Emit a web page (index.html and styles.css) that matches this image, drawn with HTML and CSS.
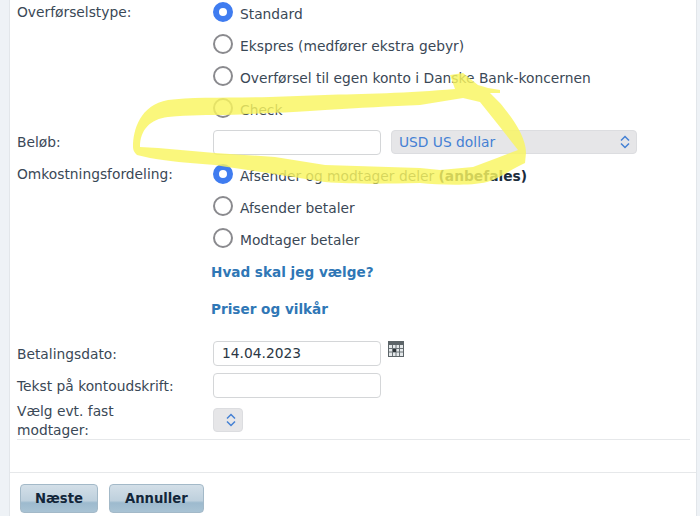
FILE: index.html
```html
<!DOCTYPE html>
<html lang="da">
<head>
<meta charset="utf-8">
<title>Overførsel</title>
<link rel="stylesheet" href="styles.css">
</head>
<body>
<div class="page">
  <main class="panel">
    <form class="form">
      <div class="row row-type">
        <div class="label">Overførselstype:</div>
        <div class="options">
          <div class="option"><span class="radio on"></span><span class="opt-text">Standard</span></div>
          <div class="option"><span class="radio"></span><span class="opt-text">Ekspres (medfører ekstra gebyr)</span></div>
          <div class="option"><span class="radio"></span><span class="opt-text">Overførsel til egen konto i Danske Bank-koncernen</span></div>
          <div class="option"><span class="radio"></span><span class="opt-text">Check</span></div>
        </div>
      </div>
      <div class="row row-amount">
        <div class="label">Beløb:</div>
        <div class="field-line">
          <div class="input"></div>
          <div class="select wide"><span>USD US dollar</span>
            <svg class="chev" viewBox="0 0 10 14" width="10" height="14"><path d="M1 5.500 5 1.500 9 5.500M1 8.500 5 12.500 9 8.500"/></svg>
          </div>
        </div>
      </div>
      <div class="row row-cost">
        <div class="label">Omkostningsfordeling:</div>
        <div class="options">
          <div class="option"><span class="radio on"></span><span class="opt-text">Afsender og modtager deler <b>(anbefales)</b></span></div>
          <div class="option"><span class="radio"></span><span class="opt-text">Afsender betaler</span></div>
          <div class="option"><span class="radio"></span><span class="opt-text">Modtager betaler</span></div>
        </div>
      </div>
      <div class="links">
        <a class="link">Hvad skal jeg vælge?</a>
        <a class="link">Priser og vilkår</a>
      </div>
      <div class="row row-date">
        <div class="label">Betalingsdato:</div>
        <div class="field-line">
          <div class="input">14.04.2023</div>
          <svg class="cal" viewBox="0 0 16 16" width="16" height="16">
            <rect x="0" y="0" width="16" height="16" fill="#5c6468"/>
            <path d="M1 4h14v11H1z" fill="#e4e8ea"/>
            <path d="M4.500 4v11M8 4v11M11.500 4v11M1 7.500h14M1 11h14" stroke="#6a7276" stroke-width="1"/>
            <rect x="5" y="8" width="3" height="3" fill="#2e3438"/>
          </svg>
        </div>
      </div>
      <div class="row row-text">
        <div class="label">Tekst på kontoudskrift:</div>
        <div class="input"></div>
      </div>
      <div class="row row-payee">
        <div class="label">Vælg evt. fast<br>modtager:</div>
        <div class="select mini">
          <svg class="chev" viewBox="0 0 10 14" width="10" height="14"><path d="M1 5.500 5 1.500 9 5.500M1 8.500 5 12.500 9 8.500"/></svg>
        </div>
      </div>
    </form>
    <div class="spacer"></div>
    <div class="actions">
      <button type="button" class="btn">Næste</button>
      <button type="button" class="btn">Annuller</button>
    </div>
  </main>
</div>
<svg class="marker" viewBox="0 0 700 516" width="700" height="516">
  <path fill-rule="evenodd" d="M133 147C133 130 140 105 168 100C190 97 225 98 270 97L325 95C360 94 410 93 455 89L450 75L463 73L478 85L488 88L500 90V93H490L500 103C510 115 526 135 526 153L525 163C510 170 500 178 487 182C470 186 440 185 420 183C380 184 350 184 325 182C300 178 260 172 215 165C190 163 165 161 150 158L137 155C134 152 133 150 133 147ZM140 147C140 130 150 119 168 117C190 115 210 115 225 115C270 113 300 112 325 110C360 108 390 106 420 105L463 98L480 102L500 127L518 150L497 158L473 167L440 170L420 168L325 165L275 157L215 153L158 148Z"/>
</svg>
</body>
</html>
```

FILE: styles.css
```css
html, body {
  margin: 0;
  padding: 0;
  width: 700px;
  height: 516px;
  overflow: hidden;
  background: #eef2f6;
  font-family: "DejaVu Sans", sans-serif;
  font-size: 13.8px;
  color: #3a4856;
}

.page {
  height: 516px;
  padding-left: 9px;
  padding-right: 3px;
  box-sizing: border-box;
}

.panel {
  height: 516px;
  background: #fff;
  border-left: 1px solid #e2e6ea;
  border-right: 1px solid #e2e6ea;
  box-sizing: border-box;
  padding-left: 7px;
  display: flex;
  flex-direction: column;
}

.form {
  margin-right: 6px;
  border-bottom: 1px solid #e6e8ea;
}

.row {
  display: grid;
  grid-template-columns: 196px 1fr;
  align-items: start;
}

.label {
  line-height: 17px;
}

.options {
  display: flex;
  flex-direction: column;
  gap: 12px;
}

.option {
  display: flex;
  align-items: center;
  gap: 7px;
  height: 20px;
  line-height: 20px;
}

.opt-text {
  margin-top: 4px;
}

.radio {
  width: 20px;
  height: 20px;
  box-sizing: border-box;
  border: 2px solid #8a8a8e;
  border-radius: 50%;
  background: #fff;
  flex: none;
}

.radio.on {
  border: 6px solid #3f7cf0;
}

.option b {
  font-weight: 700;
  color: #1c2c3c;
}

.row-type {
  padding-top: 2px;
}

.row-type .label {
  margin-top: 2px;
}

.row-amount {
  margin-top: 12px;
}

.row-amount .label {
  margin-top: 4px;
}

.row-cost {
  margin-top: 9px;
}

.row-cost .label {
  margin-top: 2px;
}

.field-line {
  display: flex;
  gap: 10px;
  align-items: flex-start;
}

.input {
  width: 168px;
  height: 25px;
  box-sizing: border-box;
  border: 1px solid #d4d6d8;
  border-radius: 4px;
  background: #fff;
  padding-left: 8px;
  line-height: 23px;
  color: #2b3744;
  flex: none;
}

.select {
  height: 24px;
  box-sizing: border-box;
  background: #e6e6e8;
  border: 1px solid #dcdde0;
  border-radius: 4px;
  display: flex;
  align-items: center;
  color: #4480d4;
  flex: none;
}

.select.wide {
  width: 246px;
  padding: 0 6px 0 7px;
  justify-content: space-between;
}

.select.mini {
  width: 30px;
  padding-right: 6px;
  justify-content: flex-end;
}

.chev {
  fill: none;
  stroke: #4480d4;
  stroke-width: 1.500;
}

.links {
  display: flex;
  flex-direction: column;
  gap: 20px;
  margin: 16px 0 0 194px;
}

.link {
  font-weight: 700;
  font-size: 13.6px;
  line-height: 17px;
  color: #2f77b6;
}

.row-date {
  margin-top: 23px;
}

.row-date .label {
  margin-top: 5px;
}

.cal {
  margin: 0 0 0 -3px;
}

.row-text {
  margin-top: 7px;
}

.row-text .label {
  margin-top: 5px;
}

.row-payee {
  margin-top: 4px;
}

.row-payee .label {
  line-height: 19px;
  margin-bottom: -1px;
}

.row-payee .select {
  margin-top: 6px;
}

.spacer {
  height: 33px;
  box-sizing: border-box;
  border-bottom: 1px solid #e6e8ea;
  margin-left: -7px;
}

.actions {
  display: flex;
  gap: 11px;
  padding: 11px 0 0 3px;
}

.btn {
  height: 29px;
  padding: 0 14px;
  border: 1px solid #a3b9c8;
  border-radius: 4px;
  background: linear-gradient(#d3dfe8 0, #bed0dd 58%, #9dbace 66%, #a9c3d4 100%);
  font: 700 13.2px "DejaVu Sans", sans-serif;
  color: #12263a;
}

.btn + .btn {
  padding: 0 15px;
}

.marker {
  position: absolute;
  left: 0;
  top: 0;
  pointer-events: none;
}

.marker path {
  fill: #f9f55f;
  fill-opacity: 0.82;
}
```
